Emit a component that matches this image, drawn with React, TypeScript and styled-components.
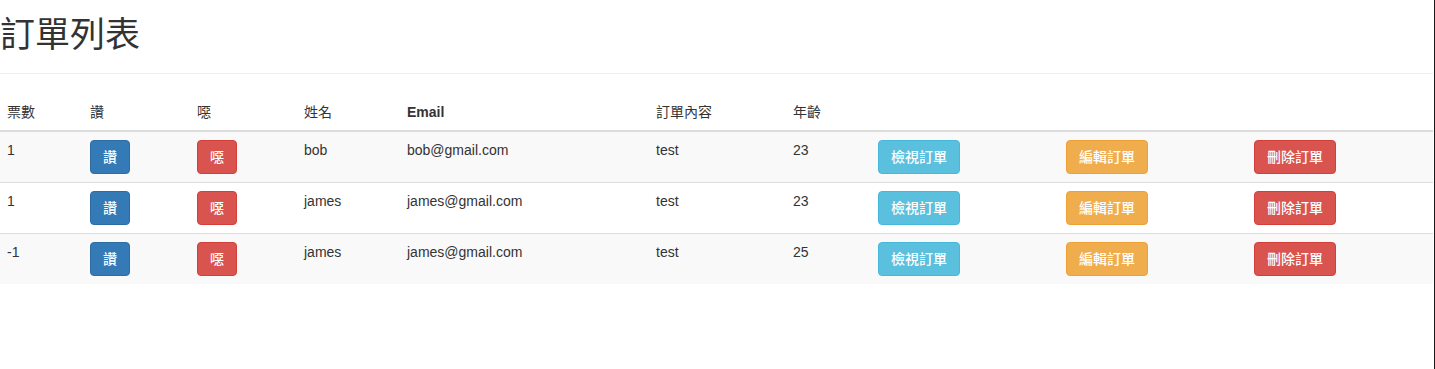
import styled, { createGlobalStyle } from "styled-components";

const GlobalStyle = createGlobalStyle`
    html, body {
        margin: 0;
        padding: 0;
        background: #fff;
    }
    body {
        font-family: "Liberation Sans", Arial, "Noto Sans CJK TC", sans-serif;
        font-size: 14px;
        line-height: 20px;
        color: #333;
    }
`;

const Page = styled.div`
    width: 1434px;
    height: 369px;
    border-right: 1px solid #1a1a1a;
    box-sizing: content-box;
`;

const Title = styled.h1`
    margin: 0;
    padding-top: 15px;
    font-size: 35px;
    line-height: 40px;
    font-weight: 400;
    color: #333;
`;

const Divider = styled.hr`
    margin: 18px 0 20px;
    border: 0;
    border-top: 1px solid #eee;
    width: 1433px;
`;

const Table = styled.table`
    width: 1433px;
    border-collapse: collapse;
    border-spacing: 0;
    table-layout: fixed;
`;

// the CJK headings render at regular weight in the original, Latin ones bold
const Th = styled.th<{ $plain?: boolean }>`
    text-align: left;
    font-weight: ${(p) => (p.$plain ? 400 : "bold")};
    padding: 8px 8px 8px 7px;
    line-height: 20px;
    vertical-align: bottom;
    border-bottom: 2px solid #ddd;
`;

const Row = styled.tr<{ $striped: boolean }>`
    background: ${(p) => (p.$striped ? "#f9f9f9" : "#fff")};
`;

const Td = styled.td`
    padding: 8px 8px 8px 7px;
    line-height: 20px;
    vertical-align: top;
    border-top: 1px solid #ddd;
    white-space: nowrap;
`;

const colors = {
    primary: { bg: "#337ab7", border: "#2e6da4" },
    danger: { bg: "#d9534f", border: "#d43f3a" },
    info: { bg: "#5bc0de", border: "#46b8da" },
    warning: { bg: "#f0ad4e", border: "#eea236" },
};

type Variant = keyof typeof colors;

const Button = styled.button<{ $variant: Variant }>`
    display: inline-block;
    padding: 6px 12px;
    font-family: "Liberation Sans", Arial, "Noto Sans CJK TC", sans-serif;
    font-size: 14px;
    line-height: 20px;
    font-weight: 500;
    color: #fff;
    background-color: ${(p) => colors[p.$variant].bg};
    border: 1px solid ${(p) => colors[p.$variant].border};
    border-radius: 4px;
    cursor: pointer;
    white-space: nowrap;
`;

const columns = [83, 107, 107, 103, 249, 137, 85, 188, 188, 186];
const headers = ["票數", "讚", "噁", "姓名", "Email", "訂單內容", "年齡", "", "", ""];

const orders = [
    { votes: 1, name: "bob", email: "bob@gmail.com", content: "test", age: 23 },
    { votes: 1, name: "james", email: "james@gmail.com", content: "test", age: 23 },
    { votes: -1, name: "james", email: "james@gmail.com", content: "test", age: 25 },
];

function App() {
    return (
        <Page>
            <GlobalStyle />
            <Title>訂單列表</Title>
            <Divider />
            <Table>
                <colgroup>
                    {columns.map((w, i) => (
                        <col key={i} style={{ width: w }} />
                    ))}
                </colgroup>
                <thead>
                    <tr>
                        {headers.map((h, i) => (
                            <Th key={i} $plain={h !== "Email"}>
                                {h}
                            </Th>
                        ))}
                    </tr>
                </thead>
                <tbody>
                    {orders.map((o, i) => (
                        <Row key={i} $striped={i % 2 === 0}>
                            <Td>{o.votes}</Td>
                            <Td>
                                <Button $variant="primary">讚</Button>
                            </Td>
                            <Td>
                                <Button $variant="danger">噁</Button>
                            </Td>
                            <Td>{o.name}</Td>
                            <Td>{o.email}</Td>
                            <Td>{o.content}</Td>
                            <Td>{o.age}</Td>
                            <Td>
                                <Button $variant="info">檢視訂單</Button>
                            </Td>
                            <Td>
                                <Button $variant="warning">編輯訂單</Button>
                            </Td>
                            <Td>
                                <Button $variant="danger">刪除訂單</Button>
                            </Td>
                        </Row>
                    ))}
                </tbody>
            </Table>
        </Page>
    );
}

export default App;
